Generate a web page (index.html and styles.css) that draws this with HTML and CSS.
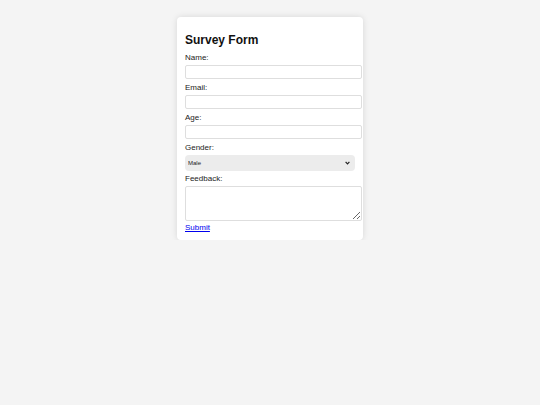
FILE: index.html
```html
<!DOCTYPE html>
<html>
<head>
<meta charset="utf-8">
<title>Survey Form</title>
<link rel="stylesheet" href="styles.css">
</head>
<body>
<div class="card">
  <h2 class="title">Survey Form</h2>
  <form class="form">
    <label class="label" for="name">Name:</label>
    <input class="field" type="text" id="name">
    <label class="label" for="email">Email:</label>
    <input class="field" type="email" id="email">
    <label class="label" for="age">Age:</label>
    <input class="field" type="number" id="age">
    <label class="label" for="gender">Gender:</label>
    <div class="select-wrap">
      <select class="select" id="gender">
        <option>Male</option>
        <option>Female</option>
        <option>Other</option>
      </select>
      <svg class="chevron" width="5" height="4" viewBox="0 0 5 4" aria-hidden="true"><path d="M0.6 0.8 L2.5 2.8 L4.4 0.8" fill="none" stroke="#222" stroke-width="1.2"/></svg>
    </div>
    <label class="label" for="feedback">Feedback:</label>
    <textarea class="area" id="feedback"></textarea>
    <a class="submit" href="#">Submit</a>
  </form>
</div>
</body>
</html>
```
FILE: styles.css
```css
body {
  margin: 0;
  background: #f4f4f4;
  font-family: "Liberation Sans", Arial, sans-serif;
  color: #222;
}
.card {
  width: 170px;
  margin: 17px auto 0;
  padding: 8px;
  background: #fff;
  border-radius: 4px;
  box-shadow: 0 0 6px rgba(0, 0, 0, 0.12);
}
.title {
  margin: 8px 0 0;
  font-size: 12px;
  line-height: 14px;
  font-weight: bold;
  color: #111;
}
.form {
  display: flex;
  flex-direction: column;
  align-items: flex-start;
  padding-top: 6px;
}
.label {
  display: block;
  font-size: 8px;
  line-height: 9px;
  margin-bottom: 3px;
  color: #222;
}
.field {
  display: block;
  width: 100%;
  height: 12px;
  padding: 0 2.5px;
  margin: 0 0 4px;
  border: 1px solid #dedede;
  border-radius: 2px;
  font-size: 8px;
  background: #fff;
}
.select-wrap {
  position: relative;
  width: 170px;
  margin: 0 0 3px;
}
.select {
  display: block;
  width: 170px;
  height: 16px;
  margin: 0;
  padding: 0 3px;
  border: none;
  border-radius: 4px;
  background-color: #ececec;
  font-size: 6px;
  font-family: "Liberation Sans", Arial, sans-serif;
  color: #222;
  appearance: none;
  -webkit-appearance: none;
}
.chevron {
  position: absolute;
  right: 5px;
  top: 6px;
  pointer-events: none;
}
.area {
  display: block;
  width: 100%;
  height: 33px;
  padding: 0 2.5px;
  margin: 0 0 2px;
  border: 1px solid #dedede;
  border-radius: 2px;
  font-size: 8px;
}
.submit {
  font-size: 8px;
  line-height: 9px;
  color: #0000ee;
  text-decoration: underline;
}
```
